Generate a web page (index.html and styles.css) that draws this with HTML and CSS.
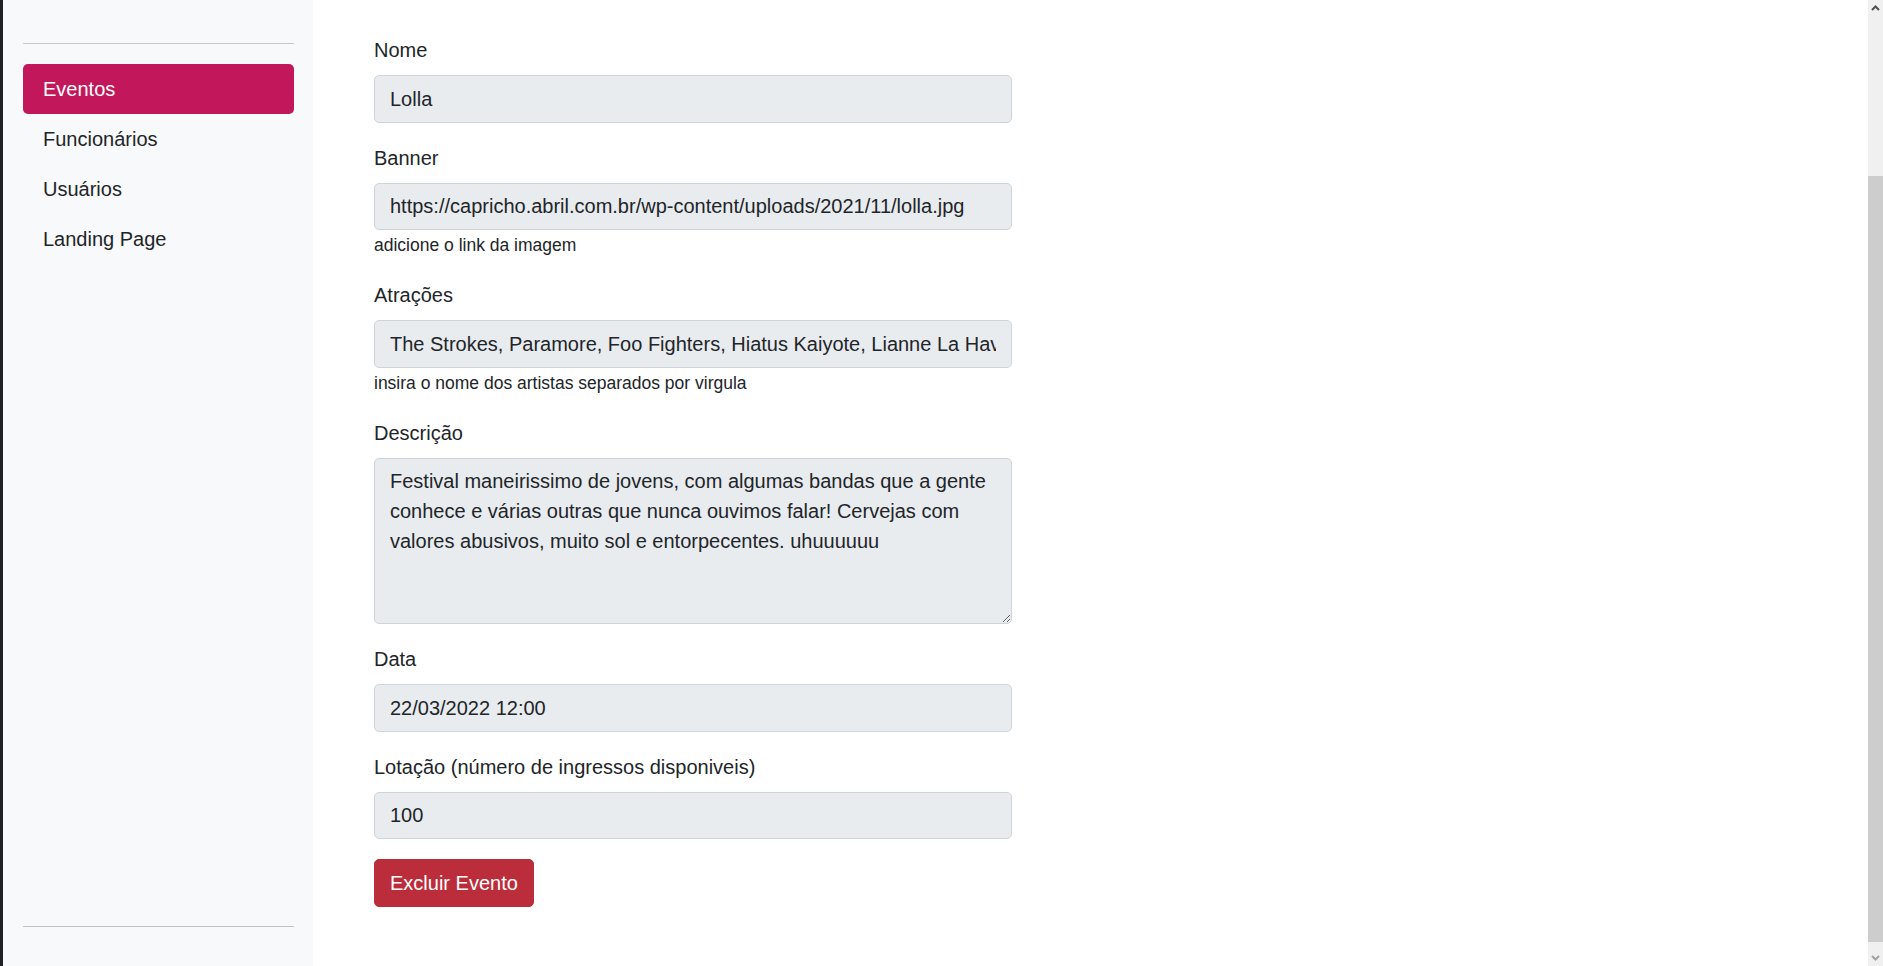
FILE: index.html
```html
<!DOCTYPE html>
<html lang="pt-BR">
<head>
<meta charset="utf-8">
<title>Editar Evento</title>
<link rel="stylesheet" href="styles.css">
</head>
<body>
<div class="layout">
  <aside class="sidebar">
    <hr class="divider">
    <ul class="nav">
      <li><a class="nav-link active" href="#">Eventos</a></li>
      <li><a class="nav-link" href="#">Funcionários</a></li>
      <li><a class="nav-link" href="#">Usuários</a></li>
      <li><a class="nav-link" href="#">Landing Page</a></li>
    </ul>
    <hr class="divider divider-bottom">
  </aside>
  <main class="main">
    <form class="event-form">
      <div class="field">
        <label class="field-label" for="nome">Nome</label>
        <input class="control" id="nome" type="text" value="Lolla" readonly>
      </div>
      <div class="field">
        <label class="field-label" for="banner">Banner</label>
        <input class="control" id="banner" type="text" value="https://capricho.abril.com.br/wp-content/uploads/2021/11/lolla.jpg" readonly>
        <div class="help">adicione o link da imagem</div>
      </div>
      <div class="field">
        <label class="field-label" for="atracoes">Atrações</label>
        <input class="control" id="atracoes" type="text" value="The Strokes, Paramore, Foo Fighters, Hiatus Kaiyote, Lianne La Havas, Jack Harlow" readonly>
        <div class="help">insira o nome dos artistas separados por virgula</div>
      </div>
      <div class="field">
        <label class="field-label" for="descricao">Descrição</label>
        <textarea class="control control-area" id="descricao" readonly>Festival maneirissimo de jovens, com algumas bandas que a gente conhece e várias outras que nunca ouvimos falar! Cervejas com valores abusivos, muito sol e entorpecentes. uhuuuuuu</textarea>
      </div>
      <div class="field">
        <label class="field-label" for="data">Data</label>
        <input class="control" id="data" type="text" value="22/03/2022 12:00" readonly>
      </div>
      <div class="field">
        <label class="field-label" for="lotacao">Lotação (número de ingressos disponiveis)</label>
        <input class="control" id="lotacao" type="text" value="100" readonly>
      </div>
      <button class="btn-danger" type="button">Excluir Evento</button>
    </form>
  </main>
  <div class="scrollbar" aria-hidden="true">
    <div class="scroll-btn">
      <svg width="15" height="17" viewBox="0 0 15 17"><polyline points="4,10 7.5,6.5 11,10" fill="none" stroke="#505050" stroke-width="2"/></svg>
    </div>
    <div class="scroll-gap"></div>
    <div class="scroll-thumb"></div>
    <div class="scroll-gap"></div>
    <div class="scroll-btn">
      <svg width="15" height="17" viewBox="0 0 15 17"><polyline points="4,7 7.5,10.5 11,7" fill="none" stroke="#a3a3a3" stroke-width="2"/></svg>
    </div>
  </div>
</div>
</body>
</html>
```
FILE: styles.css
```css
html, body {
  margin: 0;
  padding: 0;
  overflow: hidden;
}

body {
  font-family: "Liberation Sans", Arial, sans-serif;
  font-size: 20px;
  line-height: 30px;
  color: #212529;
  background: #ffffff;
}

.layout {
  display: flex;
  height: 100vh;
  border-left: 3px solid #202124;
}

.sidebar {
  width: 310px;
  flex-shrink: 0;
  box-sizing: border-box;
  background: #f8f9fa;
  display: flex;
  flex-direction: column;
  padding: 43px 19px 39px 20px;
}

.divider {
  margin: 0 0 20px;
  border: 0;
  border-top: 1px solid #c6c7c8;
  height: 0;
}

.divider-bottom {
  margin-top: auto;
  margin-bottom: 0;
  border-top-color: #c0c1c3;
}

.nav {
  list-style: none;
  margin: 0;
  padding: 0;
}

.nav-link {
  display: block;
  padding: 10px 20px;
  line-height: 30px;
  color: #212529;
  text-decoration: none;
  border-radius: 5px;
}

.nav-link.active {
  background: #c2185b;
  color: #ffffff;
}

.main {
  flex: 1;
  padding: 35px 0 0 61px;
}

.event-form {
  width: 638px;
}

.field {
  margin-bottom: 20px;
}

.field-label {
  display: block;
  margin-bottom: 10px;
  line-height: 30px;
}

.control {
  display: block;
  width: 100%;
  box-sizing: border-box;
  margin: 0;
  padding: 7.75px 15px;
  font-family: inherit;
  font-size: 20px;
  line-height: 30px;
  color: #212529;
  background: #e9ecef;
  border: 1px solid #ced4da;
  border-radius: 5px;
  outline: none;
}

.control-area {
  height: 166.5px;
  resize: vertical;
}

.help {
  font-size: 17.5px;
  line-height: 30px;
  color: #212529;
}

.btn-danger {
  display: inline-block;
  margin: 0;
  padding: 7.75px 15px;
  font-family: inherit;
  font-size: 20px;
  line-height: 30px;
  color: #ffffff;
  background: #bb2d3b;
  border: 1px solid #bb2d3b;
  border-radius: 5px;
}

.scrollbar {
  width: 15px;
  flex-shrink: 0;
  background: #f0f0f0;
  display: grid;
  grid-template-rows: 17px 159px 766px 1fr 17px;
}

.scroll-btn svg {
  display: block;
}

.scroll-thumb {
  background: #cdcdcd;
}
```
